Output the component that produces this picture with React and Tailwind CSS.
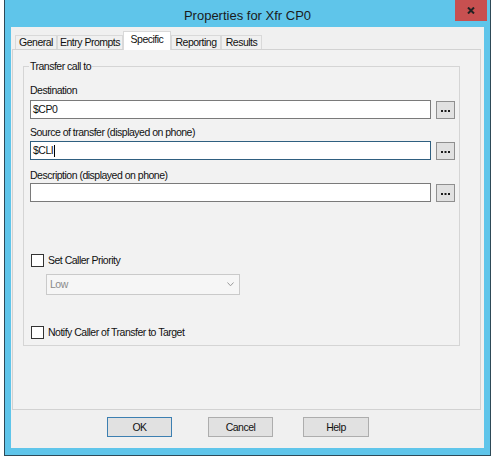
import React from "react";

function Dots() {
  return (
    <svg width="9" height="2" viewBox="0 0 9 2">
      <rect x="0" y="0" width="2" height="2" fill="#1a1a1a" />
      <rect x="3.5" y="0" width="2" height="2" fill="#1a1a1a" />
      <rect x="7" y="0" width="2" height="2" fill="#1a1a1a" />
    </svg>
  );
}

function FieldRow({ value, focused, cursor }) {
  return (
    <div className="flex items-start">
      <div
        className={
          focused
            ? "w-[401px] h-[19px] border border-[#2f5f80] bg-white pl-[2px] flex items-center"
            : "w-[401px] h-[19px] border border-[#7a7a7a] bg-white pl-[2px] flex items-center"
        }
      >
        <span>{value}</span>
        {cursor ? <span className="w-px h-[12px] bg-black ml-px" /> : null}
      </div>
      <div className="ml-[5px] mt-[1px] w-[19px] h-[18px] border border-[#8f8f8f] bg-[#e1e1e1] flex items-center justify-center pt-[2px]">
        <Dots />
      </div>
    </div>
  );
}

function Tab({ label, w, selected }) {
  if (selected) {
    return (
      <div
        className="h-[19px] -mb-px relative z-10 bg-white border border-b-0 border-[#d9d9d9] flex items-center justify-center pb-[3px] whitespace-nowrap"
        style={{ width: w }}
      >
        {label}
      </div>
    );
  }
  return (
    <div
      className="h-[14px] border border-b-0 border-[#d9d9d9] bg-[#f0f0f0] flex items-center justify-center whitespace-nowrap"
      style={{ width: w }}
    >
      {label}
    </div>
  );
}

function Check({ label }) {
  return (
    <div className="flex items-center ml-[1px] h-[13px]">
      <div className="w-[13px] h-[13px] border border-[#333333] bg-white" />
      <span className="ml-[4px]">{label}</span>
    </div>
  );
}

export default function App() {
  return (
    <div className="w-[493px] h-[461px] bg-white font-['Liberation_Sans',Arial,sans-serif] text-[10.5px] tracking-[-0.5px] leading-[13px] text-[#111111]">
      <div className="ml-[4px] w-[487px] h-[456px] border-x border-b border-[#2e4a58] bg-[#5fc5ea] flex flex-col">
        {/* Title bar */}
        <div className="h-[27px] grid grid-cols-[1fr_auto_1fr]">
          <div />
          <div className="text-[13px] tracking-normal leading-[15px] pt-[8px] text-[#1b1b1b]">
            Properties for Xfr CP0
          </div>
          <div className="flex justify-end items-start pr-[3px]">
            <div className="w-[32px] h-[21px] bg-[#c75050] flex items-center justify-center">
              <svg width="8" height="7" viewBox="0 0 8 7">
                <path d="M1 0.5 L7 6.5 M7 0.5 L1 6.5" stroke="#222222" strokeWidth="2" />
              </svg>
            </div>
          </div>
        </div>

        {/* Client area */}
        <div className="mx-[6px] h-[421px] bg-[#f0f0f0] flex flex-col">
          {/* Tabs */}
          <div className="flex items-end pl-[4px] pt-[4px]">
            <Tab label="General" w={42} />
            <Tab label="Entry Prompts" w={66} />
            <Tab label="Specific" w={48} selected />
            <Tab label="Reporting" w={50} />
            <Tab label="Results" w={41} />
          </div>

          {/* Panel */}
          <div className="ml-[1px] mr-[3px] h-[361px] border border-[#d2d2d2] bg-[#f2f2f2] flex flex-col">
            <fieldset className="ml-[10px] mr-[20px] mt-[10px] border border-[#d5d5d5] pl-[6px] pr-[4px] pb-[6px]">
              <legend className="-ml-px px-[1px] leading-[13px]">Transfer call to</legend>

              <div className="mt-[11px]">Destination</div>
              <div className="mt-[3px]">
                <FieldRow value="$CP0" />
              </div>

              <div className="mt-[7px]">Source of transfer (displayed on phone)</div>
              <div className="mt-[2px]">
                <FieldRow value="$CLI" focused cursor />
              </div>

              <div className="mt-[9px]">Description (displayed on phone)</div>
              <div className="mt-[1px]">
                <FieldRow value="" />
              </div>

              <div className="mt-[52px]">
                <Check label="Set Caller Priority" />
              </div>

              <div className="mt-[7px] ml-[16px] w-[194px] h-[21px] border border-[#cacaca] bg-[#f6f6f6] text-[#8a8a8a] pl-[3px] pr-[5px] flex items-center justify-between">
                <span>Low</span>
                <svg width="7" height="5" viewBox="0 0 7 5">
                  <path d="M0.5 0.5 L3.5 3.8 L6.5 0.5" fill="none" stroke="#9a9a9a" strokeWidth="1" />
                </svg>
              </div>

              <div className="mt-[31px]">
                <Check label="Notify Caller of Transfer to Target" />
              </div>
            </fieldset>
          </div>

          {/* Buttons */}
          <div className="flex mt-[7px]">
            <div className="ml-[96px] w-[65px] h-[20px] border border-[#3c7fb1] bg-[#e1e1e1] flex items-center justify-center">
              OK
            </div>
            <div className="ml-[36px] w-[65px] h-[20px] border border-[#adadad] bg-[#e1e1e1] flex items-center justify-center">
              Cancel
            </div>
            <div className="ml-[30px] w-[66px] h-[20px] border border-[#adadad] bg-[#e1e1e1] flex items-center justify-center">
              Help
            </div>
          </div>
        </div>
      </div>
    </div>
  );
}
